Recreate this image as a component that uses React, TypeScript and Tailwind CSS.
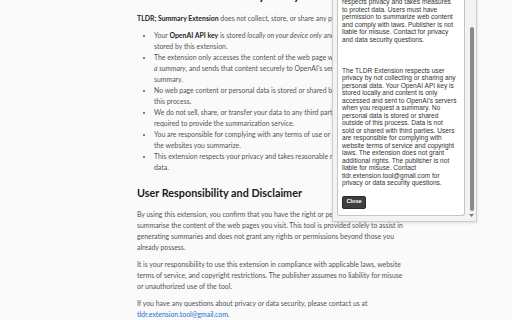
import React from 'react'

const bodyFont = { fontFamily: 'Lato, "Open Sans", sans-serif' }

function PolicyPage() {
  return (
    <div className="ml-[137px] w-[266px] -mt-[11px] text-[6.9px] leading-[11px] text-[#555]" style={bodyFont}>
      {/* Title, mostly scrolled out of view */}
      <h1 className="text-[12px] leading-[14px] font-bold text-[#1a1a1a]">TLDR Extension Privacy Policy</h1>

      <p className="mt-[9.5px]">
        <strong className="text-[#1f1f1f]">TLDR; Summary Extension</strong> does <em>not</em> collect, store, or share any personal data.
      </p>

      <ul className="mt-[6px] pl-[17px] list-disc">
        <li>
          Your <strong className="text-[#1f1f1f]">OpenAI API key</strong> is stored <em>locally on your device only</em> and never shared or
          <br />
          stored by this extension.
        </li>
        <li>
          The extension only accesses the content of the web page when you request
          <br />
          <em>a summary</em>, and sends that content securely to OpenAI's servers for the
          <br />
          summary.
        </li>
        <li>
          No web page content or personal data is stored or shared beyond
          <br />
          this process.
        </li>
        <li>
          We do not sell, share, or transfer your data to any third parties, except as
          <br />
          required to provide the summarization service.
        </li>
        <li>
          You are responsible for complying with any terms of use or copyright of
          <br />
          the websites you summarize.
        </li>
        <li>
          This extension respects your privacy and takes reasonable measures to protect
          <br />
          data.
        </li>
      </ul>

      <h2 className="mt-[13px] text-[10.8px] leading-[14px] font-bold text-[#1a1a1a]">
        User Responsibility and Disclaimer
      </h2>

      <p className="mt-[9.5px]">
        By using this extension, you confirm that you have the right or permission to
        <br />
        summarise the content of the web pages you visit. This tool is provided solely to assist in generating summaries and does not grant any rights or permissions beyond those you already possess.
      </p>
      <p className="mt-[6px]">
        It is your responsibility to use this extension in compliance with applicable laws, website terms of service, and copyright restrictions. The publisher assumes no liability for misuse or unauthorized use of the tool.
      </p>
      <p className="mt-[6px]">
        If you have any questions about privacy or data security, please contact us at{' '}
        <a href="mailto:tldr.extension.tool@gmail.com" className="text-[#1a6fd8]">tldr.extension.tool@gmail.com</a>.
      </p>
    </div>
  )
}

function ExtensionPopup() {
  return (
    <div className="absolute left-[332px] top-0 w-[145px] h-[222px] flex bg-[#f3f3f3] border-x border-b border-[#cdcdcd] shadow-[0_1px_3px_rgba(0,0,0,0.12)]">
      <div className="flex-1 pl-[4px] pb-[5px] min-w-0">
        {/* Scrolled white text box */}
        <div
          className="h-full bg-white border-x border-b border-[#c4c4c4] rounded-b-[3px] overflow-hidden pl-[4px] pr-[7.28px] text-[6.6px] leading-[7.5px] text-[#333]"
          style={{ fontFamily: '"Liberation Sans", Arial, sans-serif' }}
        >
          <p className="-mt-[2px]">
            respects privacy and takes measures to protect data. Users must have permission to summarize web content and comply with laws. Publisher is not liable for misuse. Contact for privacy and data security questions.
          </p>
          <p className="mt-[23.5px]">
            The TLDR Extension respects user privacy by not collecting or sharing any personal data. Your OpenAI API key is stored locally and content is only accessed and sent to OpenAI's servers when you request a summary. No personal data is stored or shared outside of this process. Data is not
            <br />
            sold or shared with third parties. Users are responsible for complying with website terms of service and copyright laws. The extension does not grant additional rights. The publisher is not liable for misuse. Contact tldr.extension.tool@gmail.com for privacy or data security questions.
          </p>
          <button className="mt-[9px] h-[13px] w-[24px] bg-[#3f3f3f] border border-[#2a2a2a] rounded-[2px] text-white text-[5.6px] font-bold leading-none">
            Close
          </button>
        </div>
      </div>
      {/* Scrollbar */}
      <div className="w-[11px] flex flex-col items-center pt-[27px] pb-[3px]">
        <div className="w-[4px] h-[185px] bg-[#8a8a8a] rounded-[2px] ml-[2px]" />
        <svg width="5" height="4" viewBox="0 0 5 4" className="mt-[3px] ml-[1px]">
          <path d="M0 0 L5 0 L2.5 3 Z" fill="#7a7a7a" />
        </svg>
      </div>
    </div>
  )
}

export default function App() {
  return (
    <div className="relative w-[512px] h-[320px] overflow-hidden bg-[#fafafa]">
      <PolicyPage />
      <ExtensionPopup />
    </div>
  )
}
